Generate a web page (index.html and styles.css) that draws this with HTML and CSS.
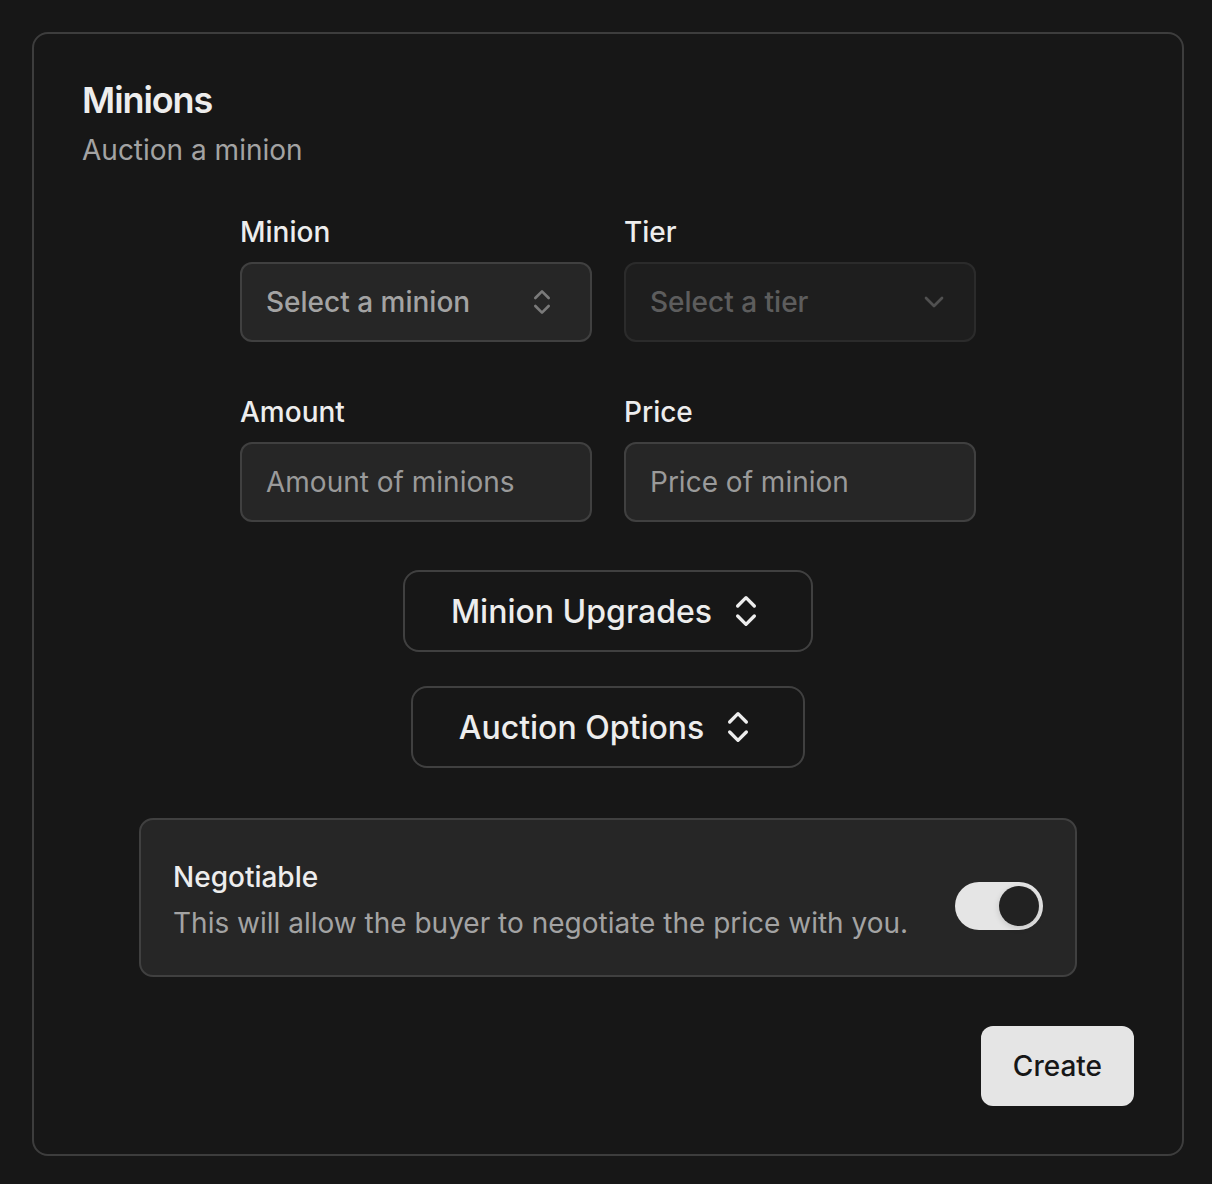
FILE: index.html
```html
<!DOCTYPE html>
<html lang="en">
<head>
<meta charset="utf-8">
<title>Minions</title>
<link rel="stylesheet" href="styles.css">
</head>
<body>
<div class="card">
  <h1 class="title">Minions</h1>
  <p class="subtitle">Auction a minion</p>
  <div class="content">
    <div class="grid">
      <div class="field">
        <span class="label">Minion</span>
        <div class="control select combo">
          <span>Select a minion</span>
          <svg class="sel-icon" viewBox="0 0 24 24" fill="none" stroke="currentColor" stroke-width="2" stroke-linecap="round" stroke-linejoin="round"><path d="m7 15 5 5 5-5"/><path d="m7 9 5-5 5 5"/></svg>
        </div>
      </div>
      <div class="field">
        <span class="label">Tier</span>
        <div class="control select disabled">
          <span>Select a tier</span>
          <svg class="sel-icon" viewBox="0 0 24 24" fill="none" stroke="currentColor" stroke-width="2" stroke-linecap="round" stroke-linejoin="round"><path d="m6 9 6 6 6-6"/></svg>
        </div>
      </div>
      <div class="field">
        <span class="label">Amount</span>
        <input class="control input" placeholder="Amount of minions">
      </div>
      <div class="field">
        <span class="label">Price</span>
        <input class="control input" placeholder="Price of minion">
      </div>
    </div>
    <div class="actions">
      <button class="outline-btn">Minion Upgrades
        <svg class="btn-icon" viewBox="0 0 24 24" fill="none" stroke="currentColor" stroke-width="2" stroke-linecap="round" stroke-linejoin="round"><path d="m7 15 5 5 5-5"/><path d="m7 9 5-5 5 5"/></svg>
      </button>
      <button class="outline-btn">Auction Options
        <svg class="btn-icon" viewBox="0 0 24 24" fill="none" stroke="currentColor" stroke-width="2" stroke-linecap="round" stroke-linejoin="round"><path d="m7 15 5 5 5-5"/><path d="m7 9 5-5 5 5"/></svg>
      </button>
    </div>
    <div class="switch-box">
      <div class="switch-text">
        <div class="switch-title">Negotiable</div>
        <div class="switch-desc">This will allow the buyer to negotiate the price with you.</div>
      </div>
      <div class="switch"><span class="thumb"></span></div>
    </div>
    <div class="footer">
      <button class="create">Create</button>
    </div>
  </div>
</div>
</body>
</html>
```

FILE: styles.css
```css
html, body {
  margin: 0;
  background: #171717;
}
body {
  font-family: Inter, "Noto Sans", sans-serif;
  color: #ededed;
}
.card {
  margin: 32px 0 28px 32px;
  width: 1152px;
  box-sizing: border-box;
  border: 2px solid #3d3d3d;
  border-radius: 16px;
  background: #171717;
  padding: 48px;
}
.title {
  margin: 0;
  font-size: 36px;
  line-height: 36px;
  font-weight: 600;
  letter-spacing: -0.03em;
  color: #ededed;
}
.subtitle {
  margin: 12px 0 0;
  font-size: 28px;
  line-height: 40px;
  color: #a3a3a3;
}
.content {
  margin-top: 48px;
}
.grid {
  width: 736px;
  margin: 0 auto;
  display: grid;
  grid-template-columns: 352px 352px;
  column-gap: 32px;
  row-gap: 56px;
}
.field {
  display: flex;
  flex-direction: column;
  gap: 16px;
}
.label {
  font-size: 28px;
  line-height: 28px;
  font-weight: 500;
  color: #ededed;
}
.control {
  height: 80px;
  width: 100%;
  box-sizing: border-box;
  border: 2px solid #404040;
  border-radius: 12px;
  background: #262626;
  padding: 0 24px;
  font-family: inherit;
  font-size: 28px;
  display: flex;
  align-items: center;
  justify-content: space-between;
  margin: 0;
}
.select {
  color: #a3a3a3;
  font-weight: 500;
}
.combo {
  padding-right: 32px;
}
.sel-icon {
  width: 32px;
  height: 32px;
  color: #7a7a7a;
  flex: none;
}
.disabled {
  opacity: 0.5;
}
.disabled .sel-icon {
  color: #8a8a8a;
}
.input {
  color: #ededed;
  outline: none;
}
.input::placeholder {
  color: #9a9a9a;
  opacity: 1;
}
.actions {
  margin-top: 48px;
  display: flex;
  flex-direction: column;
  align-items: center;
  gap: 34px;
}
.outline-btn {
  height: 82px;
  box-sizing: border-box;
  padding: 0 45px 0 46px;
  border: 2px solid #404040;
  border-radius: 16px;
  background: #171717;
  color: #ededed;
  font-family: inherit;
  font-size: 32px;
  font-weight: 500;
  display: inline-flex;
  align-items: center;
  gap: 14px;
  cursor: pointer;
}
.btn-icon {
  width: 40px;
  height: 40px;
  color: #ededed;
  flex: none;
}
.switch-box {
  margin: 50px auto 0;
  width: 938px;
  box-sizing: border-box;
  border: 2px solid #404040;
  border-radius: 14px;
  background: #262626;
  padding: 37px 32px 32px;
  display: flex;
  align-items: flex-start;
  justify-content: space-between;
}
.switch-text {
  display: flex;
  flex-direction: column;
  gap: 6px;
}
.switch-title {
  font-size: 28px;
  line-height: 40px;
  font-weight: 500;
  color: #ededed;
}
.switch-desc {
  font-size: 28px;
  line-height: 40px;
  color: #a3a3a3;
}
.switch {
  margin-top: 25px;
  width: 88px;
  height: 48px;
  box-sizing: border-box;
  padding: 0 4px;
  border-radius: 24px;
  background: #e5e5e5;
  display: flex;
  align-items: center;
  justify-content: flex-end;
  flex: none;
}
.thumb {
  width: 40px;
  height: 40px;
  border-radius: 50%;
  background: #222222;
  box-shadow: 0 2px 6px rgba(0,0,0,0.15);
}
.footer {
  margin-top: 49px;
  display: flex;
  justify-content: flex-end;
}
.create {
  height: 80px;
  padding: 0 32px;
  border: none;
  border-radius: 12px;
  background: #e5e5e5;
  color: #171717;
  font-family: inherit;
  font-size: 28px;
  font-weight: 500;
  cursor: pointer;
}
```
